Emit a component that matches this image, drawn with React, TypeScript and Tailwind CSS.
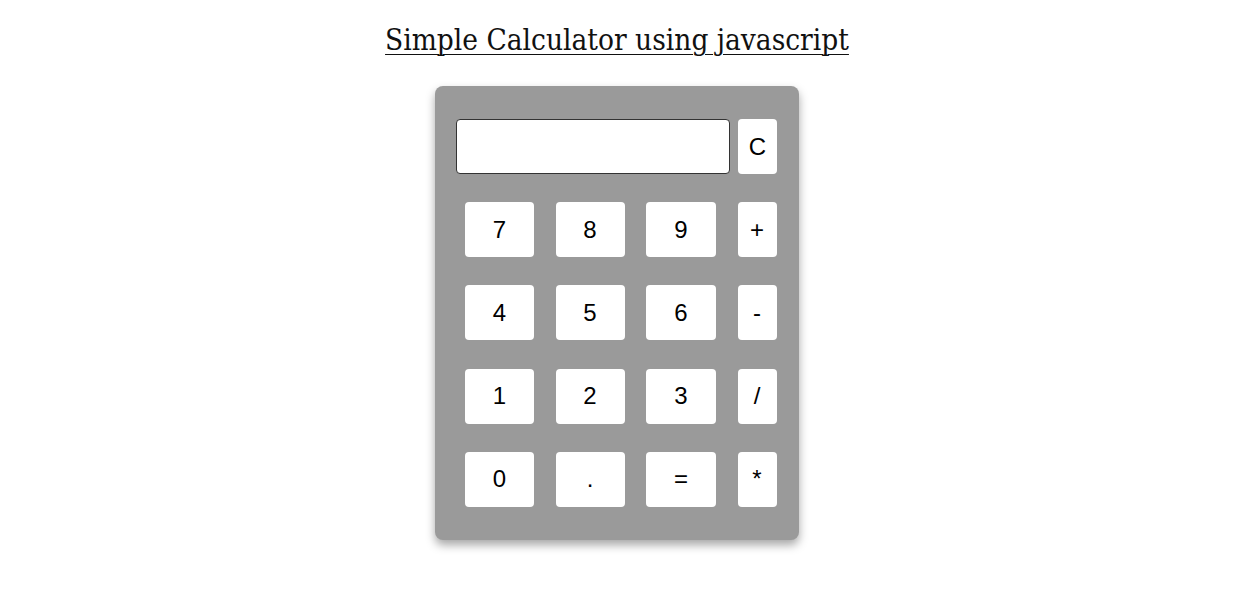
const KEYS = ["7", "8", "9", "+", "4", "5", "6", "-", "1", "2", "3", "/", "0", ".", "=", "*"];

export default function App() {
  return (
    <div className="min-h-[594px] w-full bg-white">
      <h1
        className="pt-[20px] text-center text-[29.5px] font-light leading-[40px] text-[#111] underline decoration-1 underline-offset-[4px] [font-stretch:condensed]"
        style={{ fontFamily: "'DejaVu Serif Condensed', 'DejaVu Serif', serif" }}
      >
        Simple Calculator using javascript
      </h1>

      <div className="mx-auto mt-[26px] w-[364px] rounded-[8px] bg-[#9a9a9a] pb-[33px] pl-[21px] pr-[22px] pt-[33px] shadow-[0_5px_10px_rgba(0,0,0,0.35)]">
        {/* display + clear */}
        <div className="flex items-start gap-[8px]">
          <input
            className="h-[55px] w-[274px] rounded-[4px] border border-[#333] bg-white outline-none"
            readOnly
          />
          <button
            className="h-[55px] w-[39px] rounded-[4px] bg-white text-[24px] text-black"
            style={{ fontFamily: "'Liberation Sans', Arial, sans-serif" }}
          >
            C
          </button>
        </div>

        {/* keypad */}
        <div className="mt-[28px] grid grid-cols-[69px_69px_70px_39px] gap-x-[21.5px] gap-y-[28.33px] pl-[9px]">
          {KEYS.map((k) => (
            <button
              key={k}
              className="h-[55px] rounded-[4px] bg-white text-[24px] text-black"
              style={{ fontFamily: "'Liberation Sans', Arial, sans-serif" }}
            >
              {k}
            </button>
          ))}
        </div>
      </div>
    </div>
  );
}
